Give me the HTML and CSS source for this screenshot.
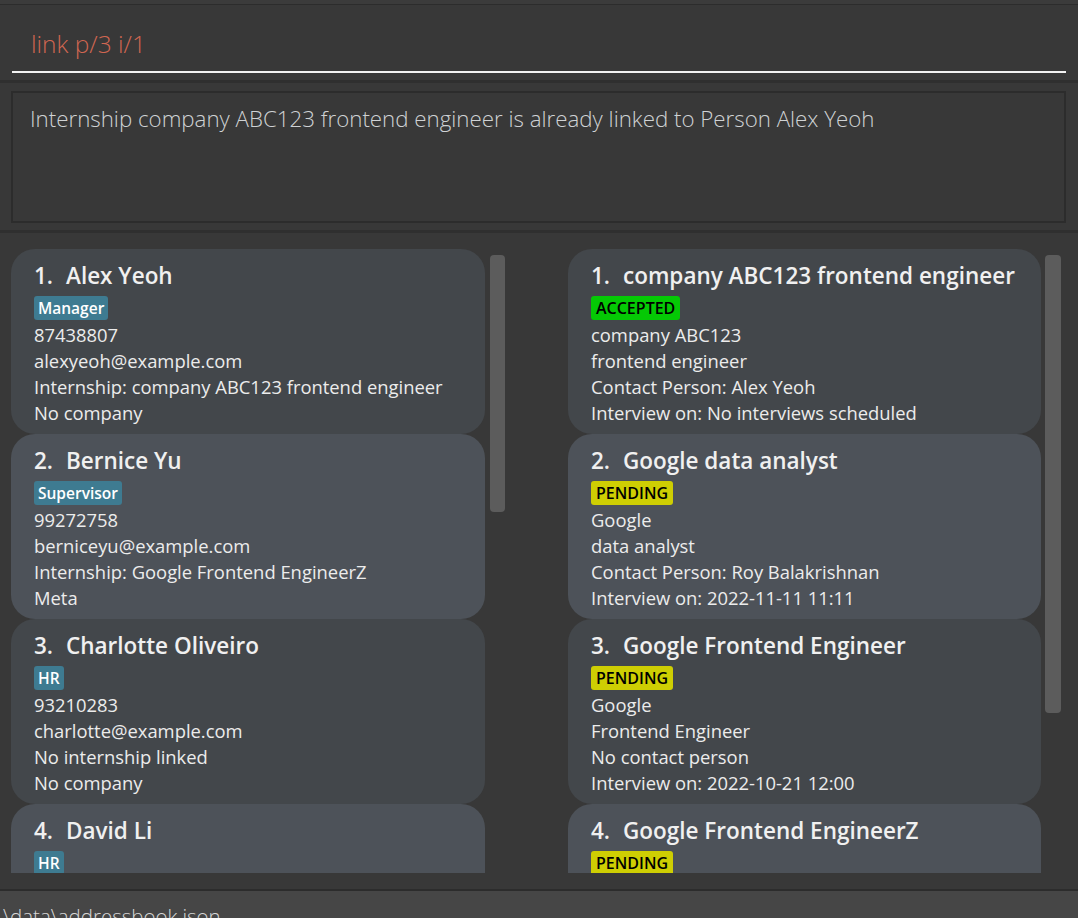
FILE: index.html
```html
<!DOCTYPE html>
<html>
<head>
<meta charset="utf-8">
<title>InternBook</title>
<link rel="stylesheet" href="styles.css">
</head>
<body>
<div class="app">
  <div class="topstrip"></div>
  <div class="command">
    <div class="cmd-input">link p/3 i/1</div>
  </div>
  <div class="result">
    <div class="result-box">Internship company ABC123 frontend engineer is already linked to Person Alex Yeoh</div>
  </div>
  <div class="lists">
    <div class="pane pane-left">
      <div class="viewport">
        <div class="card odd">
          <div class="title"><span class="idx">1.</span><span>Alex Yeoh</span></div>
          <div class="tags"><span class="tag tag-role">Manager</span></div>
          <div class="line">87438807</div>
          <div class="line">alexyeoh@example.com</div>
          <div class="line">Internship: company ABC123 frontend engineer</div>
          <div class="line">No company</div>
        </div>
        <div class="card even">
          <div class="title"><span class="idx">2.</span><span>Bernice Yu</span></div>
          <div class="tags"><span class="tag tag-role">Supervisor</span></div>
          <div class="line">99272758</div>
          <div class="line">berniceyu@example.com</div>
          <div class="line">Internship: Google Frontend EngineerZ</div>
          <div class="line">Meta</div>
        </div>
        <div class="card odd">
          <div class="title"><span class="idx">3.</span><span>Charlotte Oliveiro</span></div>
          <div class="tags"><span class="tag tag-role">HR</span></div>
          <div class="line">93210283</div>
          <div class="line">charlotte@example.com</div>
          <div class="line">No internship linked</div>
          <div class="line">No company</div>
        </div>
        <div class="card even">
          <div class="title"><span class="idx">4.</span><span>David Li</span></div>
          <div class="tags"><span class="tag tag-role">HR</span></div>
          <div class="line">91031282</div>
          <div class="line">lidavid@example.com</div>
          <div class="line">No internship linked</div>
          <div class="line">No company</div>
        </div>
      </div>
      <div class="scrollbar"><div class="thumb thumb-left"></div></div>
    </div>
    <div class="pane pane-right">
      <div class="viewport">
        <div class="card odd">
          <div class="title"><span class="idx">1.</span><span>company ABC123 frontend engineer</span></div>
          <div class="tags"><span class="tag tag-accepted">ACCEPTED</span></div>
          <div class="line">company ABC123</div>
          <div class="line">frontend engineer</div>
          <div class="line">Contact Person: Alex Yeoh</div>
          <div class="line">Interview on: No interviews scheduled</div>
        </div>
        <div class="card even">
          <div class="title"><span class="idx">2.</span><span>Google data analyst</span></div>
          <div class="tags"><span class="tag tag-pending">PENDING</span></div>
          <div class="line">Google</div>
          <div class="line">data analyst</div>
          <div class="line">Contact Person: Roy Balakrishnan</div>
          <div class="line">Interview on: 2022-11-11 11:11</div>
        </div>
        <div class="card odd">
          <div class="title"><span class="idx">3.</span><span>Google Frontend Engineer</span></div>
          <div class="tags"><span class="tag tag-pending">PENDING</span></div>
          <div class="line">Google</div>
          <div class="line">Frontend Engineer</div>
          <div class="line">No contact person</div>
          <div class="line">Interview on: 2022-10-21 12:00</div>
        </div>
        <div class="card even">
          <div class="title"><span class="idx">4.</span><span>Google Frontend EngineerZ</span></div>
          <div class="tags"><span class="tag tag-pending">PENDING</span></div>
          <div class="line">Google</div>
          <div class="line">Frontend EngineerZ</div>
          <div class="line">Contact Person: Bernice Yu</div>
          <div class="line">Interview on: No interviews scheduled</div>
        </div>
      </div>
      <div class="scrollbar"><div class="thumb thumb-right"></div></div>
    </div>
  </div>
  <div class="status"><span class="status-text">\data\addressbook.json</span></div>
</div>
</body>
</html>
```

FILE: styles.css
```css
* { box-sizing: border-box; }
html, body {
  margin: 0;
  padding: 0;
  background: #383838;
  overflow: hidden;
}
body {
  font-family: "Open Sans", "Noto Sans", sans-serif;
  color: #f0f0f0;
}
.app {
  width: 1078px;
  height: 918px;
  display: flex;
  flex-direction: column;
  overflow: hidden;
}
.topstrip {
  height: 5px;
  background: #3b3b3b;
  border-bottom: 1px solid #2c2c2c;
  flex: none;
}
.command {
  height: 75px;
  padding: 0 12px 0 12px;
  flex: none;
}
.cmd-input {
  height: 68px;
  border-bottom: 2px solid #f2f2f2;
  color: #d06651;
  font-size: 24.5px;
  font-weight: 300;
  padding: 24px 0 0 19px;
  line-height: 30px;
  white-space: nowrap;
}
.result {
  flex: none;
  height: 153px;
  border-top: 3px solid #2f2f2f;
  border-bottom: 3px solid #2f2f2f;
  padding: 8px 12px 0 11px;
}
.result-box {
  height: 132px;
  border: 2px solid #2c2c2c;
  background: #383838;
  color: #cfd2d4;
  font-size: 22.3px;
  font-weight: 300;
  padding: 11px 17px;
  line-height: 30px;
  white-space: nowrap;
}
.lists {
  flex: none;
  height: 656px;
  padding-top: 16px;
  display: flex;
}
.pane {
  display: flex;
  align-items: flex-start;
}
.pane-left {
  margin-left: 11px;
  width: 557px;
}
.pane-right {
  width: 500px;
}
.viewport {
  height: 624px;
  overflow: hidden;
  width: 474px;
}
.pane-right .viewport {
  width: 473px;
}
.card {
  height: 185px;
  border-radius: 24px;
  padding: 13px 23px 8px 23px;
  color: #ececec;
}
.card.odd { background: #43474b; }
.card.even { background: #4d5259; }
.title {
  font-size: 22.5px;
  font-weight: 600;
  line-height: 28px;
  white-space: nowrap;
  color: #f0f0f0;
}
.idx {
  display: inline-block;
  width: 32px;
}
.tags {
  margin-top: 6px;
  height: 26px;
  display: flex;
}
.tag {
  display: inline-block;
  height: 24px;
  line-height: 24px;
  padding: 0 5px;
  border-radius: 3px;
  font-size: 16px;
  font-weight: 600;
}
.tag-role { background: #3e7b91; color: #ffffff; padding: 0 4px; font-size: 15.5px; }
.tag-accepted { background: #05c905; color: #000000; }
.tag-pending { background: #cece03; color: #000000; }
.line {
  font-size: 18.4px;
  line-height: 26px;
  white-space: nowrap;
}
.scrollbar {
  margin-top: 6px;
  margin-left: 5px;
  width: 16px;
}
.pane-right .scrollbar { margin-left: 4px; }
.thumb {
  width: 15px;
  background: #5c5c5c;
  border-radius: 4px;
}
.thumb-left { height: 257px; }
.thumb-right { height: 458px; width: 16px; }
.status {
  flex: none;
  height: 29px;
  background: #464646;
  border-top: 2px solid #2c2c2c;
  padding: 11px 0 0 3px;
  overflow: hidden;
}
.status-text {
  display: block;
  font-size: 20.5px;
  font-weight: 300;
  line-height: 28px;
  color: #d6d6d6;
  white-space: nowrap;
}
```
